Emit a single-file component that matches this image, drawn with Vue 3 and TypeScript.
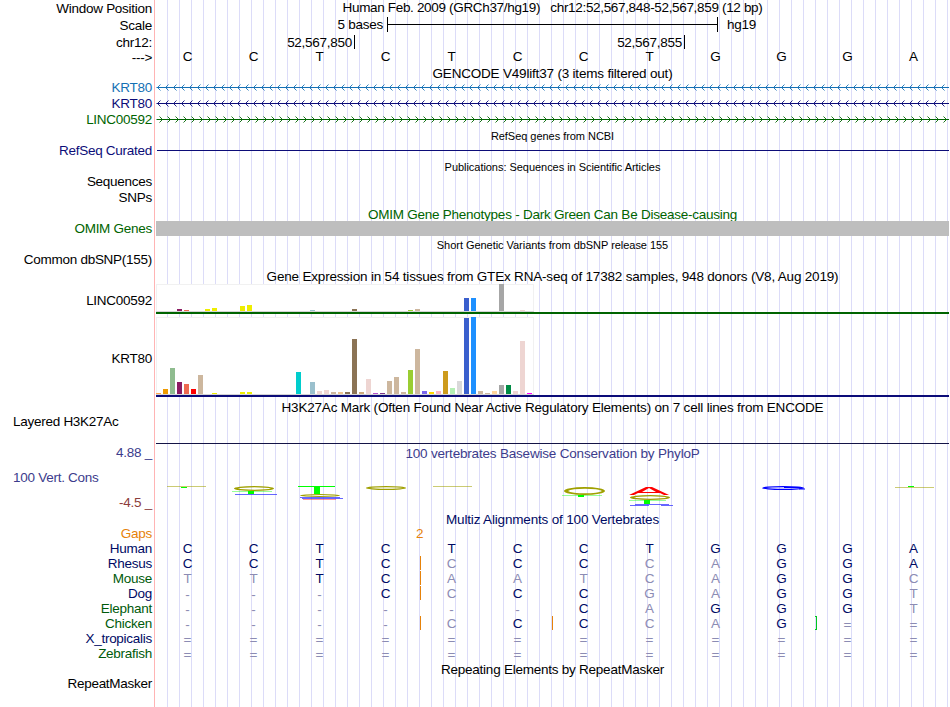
<script setup lang="ts">
interface Species {
  name: string
  tone: 'navy' | 'green'
  bases: string
  // positions where the base differs from the human sequence are drawn pale
  pale: string
  marks?: { x: number; kind: 'gap' | 'break' }[]
}

interface Gene {
  name: string
  tone: string
  top: number
  height: number
  values: Record<number, number>
}

const sequence = 'CCTCTCCTGGGA'.split('')

const transcripts = [
  { name: 'KRT80', tone: 'sky', reverse: true },
  { name: 'KRT80', tone: 'indigo', reverse: true },
  { name: 'LINC00592', tone: 'forest', reverse: false },
]

const chevrons = Array.from({ length: 99 }, (_, i) => i * 8)

function chevronPath(reverse: boolean): string {
  return chevrons
    .map((x) => (reverse ? `M${x + 4.5} 0.5L${x + 1.5} 3.5L${x + 4.5} 6.5` : `M${x + 3.5} 0.5L${x + 6.5} 3.5L${x + 3.5} 6.5`))
    .join('')
}

const brain: string[] = Array(13).fill('#eeee00')
const tissueColors: string[] = [
  '#ffa54f', '#ee9a00', '#8fbc8f', '#8b1c62', '#ee6a50', '#ff0000', '#cdb79e', ...brain,
  '#00cdcd', '#ee82ee', '#9ac0cd', '#eed5d2', '#eed5d2', '#cdb79e', '#eec591', '#8b7355', '#8b7355', '#cdaa7d',
  '#eed5d2', '#b452cd', '#7a378b', '#cdb79e', '#cdb79e', '#cdb79e', '#9acd32', '#cdb79e', '#7a67ee', '#ffd700',
  '#ffb6c1', '#cd9b1d', '#b4eeb4', '#d9d9d9', '#3a5fcd', '#1e90ff', '#cdb79e', '#cdb79e', '#ffd39b', '#a6a6a6',
  '#008b45', '#eed5d2', '#eed5d2', '#ff00ff',
]

const genes: Gene[] = [
  {
    name: 'LINC00592', tone: 'forest', top: 9, height: 30,
    values: { 3: 2, 4: 1, 7: 2, 8: 3, 12: 5, 13: 6, 22: 1, 28: 2, 36: 1, 37: 2, 44: 13, 45: 13, 49: 27, 52: 1 },
  },
  {
    name: 'KRT80', tone: 'indigo', top: 34, height: 80,
    values: {
      0: 1, 1: 5, 2: 26, 3: 12, 4: 10, 5: 5, 6: 19, 8: 1, 12: 2, 13: 2, 20: 22, 22: 12, 23: 3, 24: 4, 25: 2, 26: 2,
      27: 2, 28: 55, 29: 2, 30: 15, 31: 1, 32: 1, 33: 13, 34: 17, 35: 2, 36: 24, 37: 45, 38: 3, 39: 2, 40: 3, 41: 23,
      42: 6, 43: 13, 44: 76, 45: 77, 46: 3, 47: 1, 48: 3, 49: 9, 50: 9, 51: 3, 52: 53, 53: 1,
    },
  },
]

const species: Species[] = [
  { name: 'Human', tone: 'navy', bases: 'CCTCTCCTGGGA', pale: '............' },
  { name: 'Rhesus', tone: 'navy', bases: 'CCTCCCCCAGGA', pale: '....x..xx...', marks: [{ x: 264, kind: 'gap' }] },
  { name: 'Mouse', tone: 'green', bases: 'TTTCAATCAGGC', pale: 'xx..xxxxx..x', marks: [{ x: 264, kind: 'gap' }] },
  { name: 'Dog', tone: 'navy', bases: '---CCCCGAGGT', pale: 'xxx.x..xx..x', marks: [{ x: 264, kind: 'gap' }] },
  { name: 'Elephant', tone: 'green', bases: '------CAGGGT', pale: 'xxxxxx.x...x' },
  {
    name: 'Chicken', tone: 'green', bases: '----CCCCAG==', pale: 'xxxxx..xx.xx',
    marks: [{ x: 264, kind: 'gap' }, { x: 396, kind: 'gap' }, { x: 659, kind: 'break' }],
  },
  { name: 'X_tropicalis', tone: 'navy', bases: '============', pale: 'xxxxxxxxxxxx' },
  { name: 'Zebrafish', tone: 'green', bases: '============', pale: 'xxxxxxxxxxxx' },
]

// A flattened C: outer ellipse with a hollow shifted to the right
function ring(x: number, y: number, w: number, h: number): string {
  const rx = w / 2
  const ry = h / 2
  const ix = rx - 3
  const iy = Math.max(ry - 1, 0.4)
  const cy = y + ry
  return `M${x} ${cy}a${rx} ${ry} 0 0 1 ${w} 0h-3a${ix} ${iy} 0 0 0 ${-ix * 2 + 1} 0a${ix} ${iy} 0 0 0 ${ix * 2 - 1} 0h3a${rx} ${ry} 0 0 1 ${-w} 0z`
}
</script>

<template>
  <main class="browser">
    <section class="row h18">
      <div class="label drop1">Window Position</div>
      <div class="title position">Human Feb. 2009 (GRCh37/hg19)&nbsp;&nbsp; chr12:52,567,848-52,567,859 (12 bp)</div>
    </section>
    <section class="row h16">
      <div class="label">Scale</div>
      <div class="scale">
        <span class="scale-size">5 bases</span>
        <span class="bracket"></span>
        <span class="assembly">hg19</span>
      </div>
    </section>
    <section class="row h16">
      <div class="label drop1">chr12:</div>
      <div class="coordinates">
        <span class="coordinate">52,567,850</span>
        <span class="coordinate">52,567,855</span>
      </div>
    </section>
    <section class="row h16">
      <div class="label">---&gt;</div>
      <div class="bases reference"><span v-for="(b, i) in sequence" :key="i">{{ b }}</span></div>
    </section>

    <section class="row h14"><div class="title gencode">GENCODE V49lift37 (3 items filtered out)</div></section>
    <section v-for="(t, i) in transcripts" :key="i" class="row h16" :class="t.tone">
      <div class="label">{{ t.name }}</div>
      <svg class="transcript" width="793" height="7" viewBox="0 0 793 7">
        <path d="M0.5 3.5H793" class="strand" />
        <path :d="chevronPath(t.reverse)" class="chevrons" />
      </svg>
    </section>
    <section class="row h15"><div class="title small refseq">RefSeq genes from NCBI</div></section>
    <section class="row h16 indigo">
      <div class="label">RefSeq Curated</div>
      <div class="rule refseq-rule"></div>
    </section>
    <section class="row h15"><div class="title small publications">Publications: Sequences in Scientific Articles</div></section>
    <section class="row h16"><div class="label">Sequences</div></section>
    <section class="row h17"><div class="label">SNPs</div></section>
    <section class="row h14 forest"><div class="title omim">OMIM Gene Phenotypes - Dark Green Can Be Disease-causing</div></section>
    <section class="row h16 forest">
      <div class="label">OMIM Genes</div>
      <div class="omim-bar"></div>
    </section>
    <section class="row h15"><div class="title small dbsnp">Short Genetic Variants from dbSNP release 155</div></section>
    <section class="row h17"><div class="label">Common dbSNP(155)</div></section>
    <section class="row h15"><div class="title gtex">Gene Expression in 54 tissues from GTEx RNA-seq of 17382 samples, 948 donors (V8, Aug 2019)</div></section>

    <section v-for="g in genes" :key="g.name" class="row gene" :class="g.tone">
      <div class="label black" :class="g.name === 'KRT80' ? 'tall' : 'short'">{{ g.name }}</div>
      <svg width="793" :height="g.height" :viewBox="`0 0 793 ${g.height}`">
        <rect x=".5" y=".5" width="377" :height="g.height - 2" fill="#fff" stroke="#f1f1f1" />
        <path :d="`M0 ${g.height - 2.5}H378`" stroke="#d5d5d5" />
        <template v-for="(c, i) in tissueColors" :key="i">
          <rect v-if="g.values[i]" :x="i * 7" :y="g.height - 3 - g.values[i]" width="5" :height="g.values[i]" :fill="c" />
        </template>
        <rect x="0" :y="g.height - 2" width="793" height="2" fill="currentColor" />
      </svg>
    </section>

    <section class="row h17 signal"><div class="title h3k">H3K27Ac Mark (Often Found Near Active Regulatory Elements) on 7 cell lines from ENCODE</div></section>
    <section class="row h31">
      <div class="label left">Layered H3K27Ac</div>
      <div class="rule signal-rule"></div>
    </section>

    <section class="row conservation">
      <div class="cons-labels">
        <div class="cons-limit">4.88 _</div>
        <div class="cons-name">100 Vert. Cons</div>
        <div class="cons-limit low">-4.5 _</div>
      </div>
      <div class="cons-track">
        <div class="title phylop">100 vertebrates Basewise Conservation by PhyloP</div>
        <svg class="logo" width="793" height="22" viewBox="156 485 793 22">
          <path d="M167 486.5H206M433 486.5H472M895 487.5H934" stroke="#a0a000" stroke-opacity=".55" />
          <path d="M181 487h6v1h-6zM908 486h6v1h-6z" fill="#0f0" />
          <path d="M232 491.5H272M562 495.5H602M629 500.5H666" stroke="#0f0" stroke-opacity=".4" />
          <path d="M248 491h6v3h-6zM298 486h37v1h-37zM314 487h6v7h-6zM578 495h6v2h-6zM644 500h6v4h-6z" fill="#0f0" />
          <g fill="#a0a000" fill-rule="evenodd">
            <path :d="ring(234, 486, 40, 5)" />
            <path :d="ring(300, 494, 40, 3)" />
            <path :d="ring(366, 486, 40, 4)" />
            <path :d="ring(564, 487, 41, 8)" />
            <path :d="ring(630, 495, 40, 5)" />
          </g>
          <path d="M235 494.5H277M300 497.5H340M302 498.5H343M630 505.5H649M635 504.5H669M661 505.5H673" stroke="#33f" stroke-opacity=".75" />
          <path d="M303 499.5H336" stroke="#f00" stroke-opacity=".4" />
          <path d="M629 495L646 487H652L669 495H664L660 493H638L634 495ZM642 492H656L649 488Z" fill="#f00" fill-rule="evenodd" />
          <path :d="ring(762, 486, 42, 4)" fill="#00f" />
          <path d="M784 487.5H800M799 489H805" stroke="#00f" />
        </svg>
      </div>
    </section>

    <section class="row h14 navy"><div class="title multiz">Multiz Alignments of 100 Vertebrates</div></section>
    <section class="row h15 gaps">
      <div class="label">Gaps</div>
      <div class="gap-count">2</div>
    </section>
    <section v-for="s in species" :key="s.name" class="row h15" :class="s.tone">
      <div class="label">{{ s.name }}</div>
      <div class="bases aligned">
        <span v-for="(b, i) in s.bases.split('')" :key="i" :class="{ pale: s.pale[i] === 'x', sign: b === '-' || b === '=' }">{{ b }}</span>
        <i v-for="m in s.marks" :key="m.x" :class="m.kind" :style="{ left: m.x + 'px' }"></i>
      </div>
    </section>
    <section class="row h15"><div class="title repeats">Repeating Elements by RepeatMasker</div></section>
    <section class="row h16"><div class="label">RepeatMasker</div></section>
  </main>
</template>

<style>
body {
  margin: 0;
  background: #fff;
}
</style>

<style scoped>
.browser {
  width: 949px;
  height: 707px;
  overflow: hidden;
  color: #000;
  font: 13.5px/15px "Liberation Sans", Arial, sans-serif;
  letter-spacing: -0.27px;
  background:
    linear-gradient(#ffb4b4, #ffb4b4) 154px 0 / 1px 100% no-repeat,
    repeating-linear-gradient(90deg, #dcdcf8 0 1px, transparent 1px 12px) 167px 0 / 782px 100% no-repeat;
}
.row {
  display: grid;
  grid-template-columns: 152px 793px;
  column-gap: 4px;
  align-items: start;
}
.row > .title { grid-column: 2; }
.label { text-align: right; white-space: nowrap; height: 15px; }
.label.left { text-align: left; padding-left: 13px; }
.drop1 { padding-top: 1px; }
.title { text-align: center; white-space: pre; height: 14px; }
.small { font-size: 11px; line-height: 13px; padding-top: 2px; letter-spacing: -0.04px; }
.position { letter-spacing: -0.33px; }
.gtex, .h3k, .gencode, .phylop { letter-spacing: -0.19px; }
.multiz { letter-spacing: -0.17px; }
.omim, .repeats { letter-spacing: -0.24px; }
.repeats { padding-top: 1px; }
.signal { padding-top: 3px; }
.h14 { height: 14px; }
.h15 { height: 15px; }
.h16 { height: 16px; }
.h17 { height: 17px; }
.h17.signal { height: 14px; }
.h18 { height: 18px; }
.h31 { height: 31px; }
.sky { color: #1470b4; }
.indigo { color: #0c0c78; }
.forest { color: #006400; }
.navy { color: #000a64; }
.green { color: #005a0a; }
.black { color: #000; }
.gaps { color: #e6820a; }

.scale { display: flex; margin-top: -1px; }
.scale-size { width: 227px; text-align: right; }
.bracket {
  width: 329px;
  height: 15px;
  margin-left: 4px;
  border: solid #000;
  border-width: 0 1px;
  background: linear-gradient(#000, #000) 0 7px / 100% 1px no-repeat;
}
.assembly { margin-left: 9px; }
.coordinates { display: flex; padding-top: 1px; }
.coordinate {
  width: 196px;
  height: 14px;
  padding-right: 2px;
  border-right: 1px solid #000;
  text-align: right;
}
.coordinate + .coordinate { width: 327px; }

.bases {
  display: grid;
  grid-template-columns: repeat(12, 66px);
  margin-left: -1px;
  position: relative;
  text-align: center;
  letter-spacing: 0;
}
.bases span { margin-left: -1px; }
.aligned { color: #000a64; }
.reference { margin-top: -1px; }
.aligned .pale { color: #8c8cb4; }
.sign { padding-top: 1px; }
.gap, .break { position: absolute; top: 0; width: 1px; height: 14px; margin-left: 1px; background: #e6820a; }
.break { width: 1px; height: 12px; background: none; border: 1px solid #00c81e; border-left: 0; }
.gap-count { padding-left: 260px; }

.transcript { margin-top: 4px; }
.strand { stroke: currentColor; }
.chevrons { stroke: currentColor; fill: none; stroke-width: .9; }
.rule { height: 1px; background: currentColor; }
.refseq-rule { margin: 7px 0 0 1px; }
.signal-rule { margin-top: 29px; background: #141446; }
.omim-bar { height: 15px; background: #bebebe; }

.gene svg { display: block; }
.gene .short { padding-top: 9px; }
.gene .tall { padding-top: 34px; }
.gene + .gene { margin-top: 3px; }

.conservation { height: 67px; color: #3c3c8c; }
.cons-limit { text-align: right; }
.cons-name { padding: 10px 0 0 13px; }
.low { padding-top: 10px; color: #8c3c3c; }
.cons-track { padding-top: 1px; }
.logo { display: block; margin-top: 25px; }
</style>
